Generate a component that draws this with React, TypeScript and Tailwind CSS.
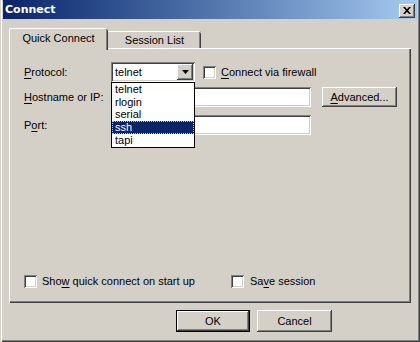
import React from "react";

const raised =
  "shadow-[inset_-1px_-1px_0_#404040,inset_1px_1px_0_#ffffff,inset_-2px_-2px_0_#808080,inset_2px_2px_0_#d4d0c8]";
const sunken =
  "shadow-[inset_1px_1px_0_#808080,inset_-1px_-1px_0_#ffffff,inset_2px_2px_0_#404040,inset_-2px_-2px_0_#d4d0c8]";

function U({ children }: { children: React.ReactNode }) {
  return <span className="underline underline-offset-[2px] decoration-1">{children}</span>;
}

function Check() {
  return <div className={`w-[13px] h-[13px] shrink-0 bg-white ${sunken}`} />;
}

export default function App() {
  return (
    <div className="w-[420px] h-[342px] bg-[#d4d0c8] flex flex-col px-[3px] overflow-hidden text-[11px] leading-none text-black font-['Liberation_Sans',Arial,sans-serif] shadow-[inset_1px_0_0_#d4d0c8,inset_2px_0_0_#ffffff,inset_-1px_-1px_0_#404040,inset_-2px_-2px_0_#808080]">
      {/* Title bar */}
      <div className="h-[19px] shrink-0 bg-linear-to-r from-[#0a246a] to-[#a6caf0] flex items-center justify-between pl-[2px] pr-[2px]">
        <span className="text-white font-bold text-[11px] font-['DejaVu_Sans',sans-serif]">Connect</span>
        <div className={`w-[16px] h-[14px] mt-[2px] bg-[#d4d0c8] flex items-center justify-center ${raised}`}>
          <svg width="8" height="7" viewBox="0 0 8 7">
            <path d="M0 0h2l2 2.2L6 0h2L5 3.5 8 7H6L4 4.8 2 7H0l3-3.5z" fill="#000" />
          </svg>
        </div>
      </div>

      {/* Body */}
      <div className="flex flex-col px-[6px]">
        {/* Tabs */}
        <div className="mt-[9px] h-[20px] flex items-end relative z-10">
          <div className="w-[99px] h-[22px] -mb-[2px] bg-[#d4d0c8] rounded-tl-[2px] rounded-tr-[2px] flex justify-center pt-[5px] shadow-[inset_1px_0_0_#ffffff,inset_0_1px_0_#ffffff,inset_-1px_0_0_#404040,inset_-2px_0_0_#808080]">
            Quick Connect
          </div>
          <div className="w-[93px] h-[17px] bg-[#d4d0c8] rounded-tr-[2px] flex justify-center pt-[4px] shadow-[inset_0_1px_0_#ffffff,inset_-1px_0_0_#404040,inset_-2px_0_0_#808080]">
            Session List
          </div>
        </div>

        {/* Panel */}
        <div className="relative h-[255px] flex flex-col pl-[15px] pb-[15px] shadow-[inset_1px_1px_0_#ffffff,inset_-1px_-1px_0_#404040,inset_-2px_-2px_0_#808080]">
          {/* Protocol row */}
          <div className="mt-[14px] h-[20px] flex items-center">
            <div className="w-[87px]">
              <U>P</U>rotocol:
            </div>
            <div className={`w-[84px] h-[20px] bg-white flex items-center p-[2px] ${sunken}`}>
              <span className="flex-1 pl-[2px]">telnet</span>
              <div className={`w-[16px] h-[16px] bg-[#d4d0c8] flex items-center justify-center ${raised}`}>
                <svg width="7" height="4" viewBox="0 0 7 4">
                  <path d="M0 0h7L3.5 4z" fill="#000" />
                </svg>
              </div>
            </div>
            <div className="ml-[8px] flex items-center gap-[5px]">
              <Check />
              <span>
                <U>C</U>onnect via firewall
              </span>
            </div>
          </div>

          {/* Hostname row */}
          <div className="mt-[5px] h-[20px] flex items-center">
            <div className="w-[87px]">
              <U>H</U>ostname or IP:
            </div>
            <div className={`w-[200px] h-[20px] bg-white ${sunken}`} />
            <div className={`ml-[11px] w-[75px] h-[20px] flex items-center justify-center ${raised}`}>
              <span>
                <U>A</U>dvanced...
              </span>
            </div>
          </div>

          {/* Port row */}
          <div className="mt-[8px] h-[20px] flex items-center">
            <div className="w-[87px]">
              P<U>o</U>rt:
            </div>
            <div className={`w-[200px] h-[20px] bg-white ${sunken}`} />
          </div>

          {/* Bottom checkboxes */}
          <div className="mt-auto h-[13px] flex items-center">
            <div className="w-[207px] flex items-center gap-[5px]">
              <Check />
              <span>
                Sho<U>w</U> quick connect on start up
              </span>
            </div>
            <div className="flex items-center gap-[6px]">
              <Check />
              <span>
                Sa<U>v</U>e session
              </span>
            </div>
          </div>

          {/* Dropdown list overlay */}
          <div className="absolute left-[102px] top-[34px] w-[84px] h-[66px] bg-white border border-black z-20 flex flex-col">
            <div className="h-[13px] flex items-center pl-[3px]">telnet</div>
            <div className="h-[13px] flex items-center pl-[3px]">rlogin</div>
            <div className="h-[13px] flex items-center pl-[3px]">serial</div>
            <div className="h-[13px] flex items-center pl-[3px] bg-[#0a246a] text-white outline-1 outline-dotted -outline-offset-1 outline-[#c8c8a0]">
              ssh
            </div>
            <div className="h-[13px] flex items-center pl-[3px]">tapi</div>
          </div>
        </div>

        {/* Buttons */}
        <div className="mt-[7px] flex gap-[7px] pl-[167px]">
          <div className="w-[74px] h-[22px] flex items-center justify-center shadow-[inset_0_0_0_1px_#000000,inset_-2px_-2px_0_#404040,inset_2px_2px_0_#ffffff,inset_-3px_-3px_0_#808080]">
            OK
          </div>
          <div className={`w-[75px] h-[22px] flex items-center justify-center ${raised}`}>Cancel</div>
        </div>
      </div>
    </div>
  );
}
